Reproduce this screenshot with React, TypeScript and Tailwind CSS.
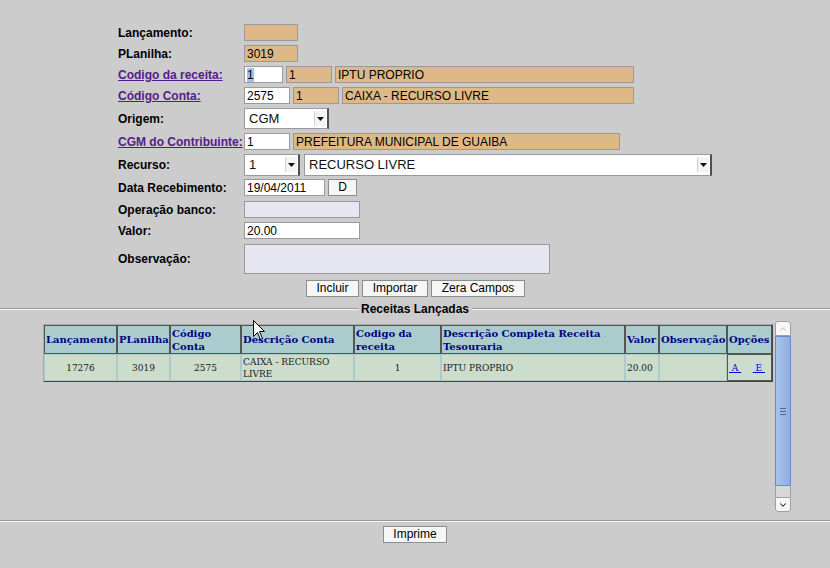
import { ChevronDown, ChevronUp } from "lucide-react";

const tan = "bg-[#deb887]";

function Box({ w, bg, children }: { w: string; bg: string; children?: React.ReactNode }) {
    return (
        <div className={`${w} ${bg} h-[17px] border border-[#9a9a9a] px-[2px] text-[12px] leading-[16px] text-black whitespace-nowrap overflow-hidden`}>
            {children}
        </div>
    );
}

function Select({ w, h, value }: { w: string; h: string; value: string }) {
    return (
        <div className={`${w} ${h} flex items-center bg-white border border-[#9a9a9a] border-r-2 border-r-[#505050] pl-[4px] text-[13px] text-[#111]`}>
            <span className="flex-1 whitespace-nowrap">{value}</span>
            <div className="w-[12px] h-[15px] mr-[1px] bg-[#f4f4f4] border-l border-[#d0d0d0] flex items-center justify-center">
                <svg width="7" height="4" viewBox="0 0 7 4"><path d="M0 0 H7 L3.5 4 Z" fill="#111" /></svg>
            </div>
        </div>
    );
}

function Row({ h, label, link, children }: { h: string; label: string; link?: boolean; children: React.ReactNode }) {
    return (
        <div className={`flex items-center ${h}`}>
            <div className="w-[126px] text-[12px] font-bold">
                {link ? <a className="text-[#551a8b] underline">{label}</a> : <span className="text-black">{label}</span>}
            </div>
            <div className="flex items-center gap-[3px]">{children}</div>
        </div>
    );
}

function Btn({ w, children }: { w: string; children: React.ReactNode }) {
    return (
        <button className={`${w} h-[17px] bg-[#f6f6f6] border border-[#8c8c8c] text-[12px] leading-[15px] text-black`}>
            {children}
        </button>
    );
}

const cols = ["w-[73px]", "w-[53px]", "w-[71px]", "w-[113px]", "w-[87px]", "w-[184px]", "w-[34px]", "w-[68px]", "w-[45px]"];
const heads = ["Lançamento", "PLanilha", "Código Conta", "Descrição Conta", "Codigo da receita", "Descrição Completa Receita Tesouraria", "Valor", "Observação", "Opções"];

export default function App() {
    return (
        <div className="relative w-[830px] h-[568px] bg-[#cccccc] overflow-hidden" style={{ fontFamily: '"Liberation Sans", Arial, sans-serif' }}>
            {/* formulario */}
            <div className="pt-[22px] pl-[118px]">
                <Row h="h-[21px]" label="Lançamento:"><Box w="w-[54px]" bg={tan} /></Row>
                <Row h="h-[21px]" label="PLanilha:"><Box w="w-[54px]" bg={tan}>3019</Box></Row>
                <Row h="h-[21px]" label="Codigo da receita:" link>
                    <Box w="w-[39px]" bg="bg-white"><span className="bg-[#a3c1e8]">1</span></Box>
                    <Box w="w-[46px]" bg={tan}>1</Box>
                    <Box w="w-[299px]" bg={tan}>IPTU PROPRIO</Box>
                </Row>
                <Row h="h-[21px]" label="Código Conta:" link>
                    <Box w="w-[46px]" bg="bg-white">2575</Box>
                    <Box w="w-[46px]" bg={tan}>1</Box>
                    <Box w="w-[292px]" bg={tan}>CAIXA - RECURSO LIVRE</Box>
                </Row>
                <Row h="h-[25px]" label="Origem:"><Select w="w-[85px]" h="h-[21px]" value="CGM" /></Row>
                <Row h="h-[21px]" label="CGM do Contribuinte:" link>
                    <Box w="w-[46px]" bg="bg-white">1</Box>
                    <Box w="w-[327px]" bg={tan}>PREFEITURA MUNICIPAL DE GUAIBA</Box>
                </Row>
                <Row h="h-[25px]" label="Recurso:">
                    <Select w="w-[56px]" h="h-[22px]" value="1" />
                    <div className="ml-[1px]"><Select w="w-[408px]" h="h-[22px]" value="RECURSO LIVRE" /></div>
                </Row>
                <Row h="h-[21px]" label="Data Recebimento:">
                    <Box w="w-[81px]" bg="bg-white">19/04/2011</Box>
                    <Btn w="w-[29px]">D</Btn>
                </Row>
                <Row h="h-[23px]" label="Operação banco:"><Box w="w-[116px]" bg="bg-[#e6e6f2]" /></Row>
                <Row h="h-[19px]" label="Valor:"><Box w="w-[116px]" bg="bg-white">20.00</Box></Row>
                <Row h="h-[37px]" label="Observação:">
                    <div className="w-[306px] h-[30px] bg-[#e6e6f2] border border-[#9a9a9a]" />
                </Row>
            </div>
            <div className="h-[23px] flex items-center justify-center gap-[3px] pl-[1px]">
                <Btn w="w-[53px]">Incluir</Btn>
                <Btn w="w-[66px]">Importar</Btn>
                <Btn w="w-[94px]">Zera Campos</Btn>
            </div>

            {/* receitas lancadas */}
            <div className="h-[18px] flex items-center">
                <div className="flex-1 border-t border-b border-t-[#999] border-b-[#f4f4f4]" />
                <span className="px-[3px] text-[12px] font-bold text-black">Receitas Lançadas</span>
                <div className="flex-1 border-t border-b border-t-[#999] border-b-[#f4f4f4]" />
            </div>
            <div className="h-[198px] flex">
                <div className="w-[775px] pl-[43px] pt-[6px]" style={{ fontFamily: '"DejaVu Serif", serif' }}>
                    <table className="table-fixed border-separate border-spacing-0 border border-t-[#aaa] border-l-[#aaa] border-r-[#444] border-b-[#444] w-[728px]">
                        <colgroup>
                            {cols.map((c, i) => <col key={i} className={c} />)}
                        </colgroup>
                        <thead>
                            <tr>
                                {heads.map((t, i) => (
                                    <th key={i} className="h-[29px] bg-[#aacccc] border border-[#555] px-[1px] text-left align-middle text-[10px] leading-[13px] font-bold text-[#000080]">
                                        {t}
                                    </th>
                                ))}
                            </tr>
                        </thead>
                        <tbody className="text-[9px] leading-[12px] text-[#1a1a1a]">
                            <tr>
                                <td className="h-[27px] bg-[#ccddcc] border border-[#aacccc] text-center">17276</td>
                                <td className="bg-[#ccddcc] border border-[#aacccc] text-center">3019</td>
                                <td className="bg-[#ccddcc] border border-[#aacccc] text-center">2575</td>
                                <td className="bg-[#ccddcc] border border-[#aacccc] px-[1px]">CAIXA - RECURSO LIVRE</td>
                                <td className="bg-[#ccddcc] border border-[#aacccc] text-center">1</td>
                                <td className="bg-[#ccddcc] border border-[#aacccc] px-[1px]">IPTU PROPRIO</td>
                                <td className="bg-[#ccddcc] border border-[#aacccc] px-[1px]">20.00</td>
                                <td className="bg-[#ccddcc] border border-[#aacccc]"></td>
                                <td className="bg-[#ccddcc] border border-[#555] px-[1px] whitespace-nowrap">
                                    <a className="text-[#0000ee] underline">&nbsp;A&nbsp;</a>
                                    &nbsp;&nbsp;&nbsp;&nbsp;
                                    <a className="text-[#0000ee] underline">&nbsp;E&nbsp;</a>
                                </td>
                            </tr>
                        </tbody>
                    </table>
                </div>
                {/* scrollbar */}
                <div className="mt-[3px] w-[16px] h-[191px] flex flex-col">
                    <div className="h-[15px] bg-[#f7f7f7] border border-[#a0a0a0] rounded-t-[3px] flex items-center justify-center">
                        <ChevronUp size={10} strokeWidth={2} color="#b0b0b0" />
                    </div>
                    <div className="h-[150px] bg-gradient-to-r from-[#a9c3ec] via-[#9bb8e8] to-[#8eaee2] border border-[#6a8cc6] flex flex-col items-center justify-center gap-[2px]">
                        <div className="w-[6px] h-px bg-[#4f6a9c]" />
                        <div className="w-[6px] h-px bg-[#4f6a9c]" />
                        <div className="w-[6px] h-px bg-[#4f6a9c]" />
                    </div>
                    <div className="h-[11px] bg-[#d8d8d8] border-x border-[#a0a0a0]" />
                    <div className="h-[15px] bg-[#f7f7f7] border border-[#a0a0a0] rounded-b-[3px] flex items-center justify-center">
                        <ChevronDown size={10} strokeWidth={2.5} color="#222" />
                    </div>
                </div>
            </div>
            <div className="mt-[4px] border-t border-b border-t-[#999] border-b-[#f4f4f4]" />
            <div className="mt-[4px] flex justify-center">
                <Btn w="w-[64px]">Imprime</Btn>
            </div>

            {/* cursor do mouse */}
            <svg className="absolute left-[253px] top-[320px]" width="13" height="21" viewBox="0 0 13 21">
                <path d="M0.5 0.5 V16.5 L4.5 12.5 L7.5 19.5 L9.5 18.5 L6.5 11.5 H11.5 Z" fill="#fff" stroke="#000" strokeWidth="1" />
            </svg>
        </div>
    );
}
